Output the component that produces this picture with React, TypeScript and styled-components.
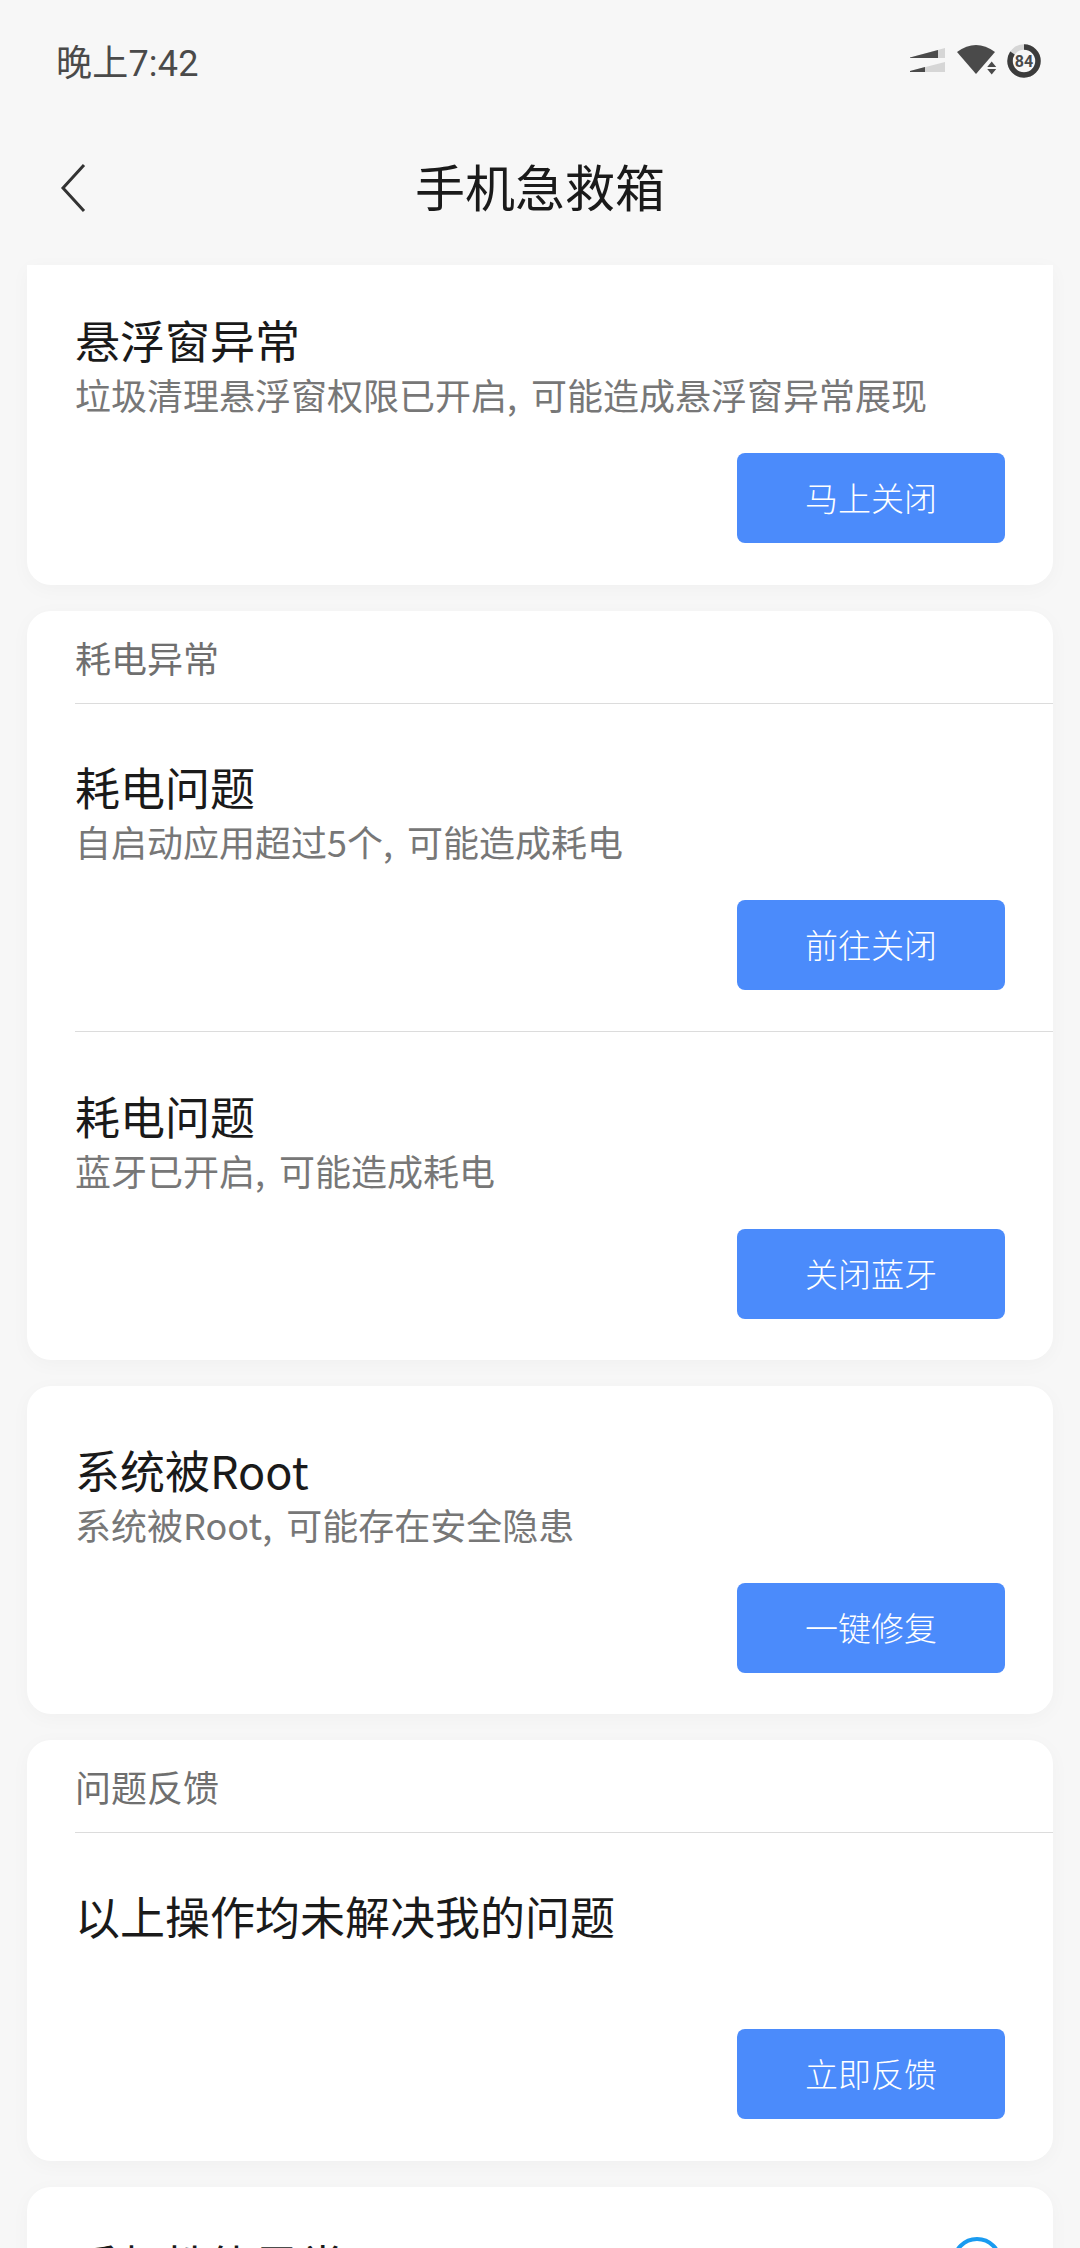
import { createGlobalStyle } from 'styled-components';
import styled from 'styled-components';

const GlobalStyle = createGlobalStyle`
  html, body {
    margin: 0;
    padding: 0;
    background: #f7f7f7;
  }
  body {
    font-family: "Noto Sans CJK SC", "Noto Sans", sans-serif;
  }
`

const Page = styled.div`
  width: 1080px;
  height: 2248px;
  overflow: hidden;
  background: #f7f7f7;
`

const StatusBar = styled.div`
  height: 124px;
  padding: 0 20px 2px 56px;
  box-sizing: border-box;
  display: flex;
  align-items: center;
  justify-content: space-between;
`

const Time = styled.div`
  margin-top: 6px;
  font-family: Roboto, "Noto Sans CJK SC", sans-serif;
  font-size: 36px;
  line-height: 50px;
  letter-spacing: 0.2px;
  color: #4a4a4a;
`

const StatusIcons = styled.svg`
  width: 150px;
  height: 60px;
  display: block;
`

const NavBar = styled.div`
  height: 141px;
  padding: 0 0 14px 59px;
  box-sizing: border-box;
  display: flex;
  align-items: center;
  position: relative;
`

const BackIcon = styled.svg`
  width: 28px;
  height: 50px;
  display: block;
`

const NavTitle = styled.div`
  position: absolute;
  left: 0;
  right: 0;
  top: 26px;
  text-align: center;
  font-size: 50px;
  line-height: 70px;
  color: #1a1a1a;
`

const CardList = styled.div`
  padding: 0 27px;
  display: flex;
  flex-direction: column;
  gap: 26px;
`

const Card = styled.div<{ $flatTop?: boolean }>`
  background: #fff;
  border-radius: ${(p) => (p.$flatTop ? '0 0 24px 24px' : '24px')};
  box-shadow: 0 4px 20px rgba(0, 0, 0, 0.03);
  overflow: hidden;
`

const SectionLabel = styled.div`
  height: 92px;
  margin-left: 48px;
  padding-top: 22px;
  box-sizing: border-box;
  font-size: 36px;
  line-height: 48px;
  color: #6f6f6f;
  box-shadow: 0 1px 0 #dcdcdc;
`

const Item = styled.div<{ $top?: number; $bottom?: number }>`
  margin-left: 48px;
  padding: ${(p) => p.$top ?? 54}px 48px ${(p) => p.$bottom ?? 41}px 0;
  & + & {
    border-top: 1px solid #dcdcdc;
  }
`

const ItemTitle = styled.div`
  font-size: 45px;
  line-height: 60px;
  color: #1a1a1a;
`

const ItemDesc = styled.div`
  min-height: 48px;
  font-size: 36px;
  line-height: 48px;
  word-spacing: 6px;
  color: #777;
`

const ActionRow = styled.div`
  margin-top: 35px;
  display: flex;
  justify-content: flex-end;
`

const ActionButton = styled.button`
  width: 268px;
  height: 90px;
  padding: 0 0 3px;
  border: 0;
  border-radius: 8px;
  background: #4b8bfb;
  color: #fff;
  font-family: inherit;
  font-size: 33px;
  font-weight: 300;
`

const Peek = styled.div`
  position: relative;
  padding: 48px 48px 0;
  height: 120px;
`

const Spinner = styled.div`
  position: absolute;
  top: 50px;
  right: 51px;
  width: 50px;
  height: 50px;
  box-sizing: border-box;
  border: 4px solid #1a9bf0;
  border-radius: 50%;
`

const App = () => {
  return (
    <Page>
      <GlobalStyle />
      <StatusBar>
        <Time>晚上7:42</Time>
        <StatusIcons viewBox='0 0 150 60'>
          <path d='M0 26.5 L35 17 V27 H0 Z' fill='#d6d6d6' />
          <path d='M0 26.5 L28 19 V27 H0 Z' fill='#4a4a4a' />
          <path d='M0 40 L35 31 V41 H0 Z' fill='#d6d6d6' />
          <path d='M0 40 L15 36 V41 H0 Z' fill='#4a4a4a' />
          <path d='M47 21 Q66 7 85 21 L66 43 Z' fill='#4a4a4a' />
          <path d='M81.7 30.5 l4.5 5.5 h-9 Z M81.7 43.5 l4.5 -5.5 h-9 Z' fill='#4a4a4a' />
          <circle cx='114' cy='30' r='14' fill='none' stroke='#d6d6d6' strokeWidth='5.5' />
          <circle cx='114' cy='30' r='14' fill='none' stroke='#3c3c3c' strokeWidth='5.5' strokeDasharray='74 88' transform='rotate(-90 114 30)' />
          <text x='114' y='36' textAnchor='middle' fontSize='16' fontWeight='700' fontFamily='Roboto, sans-serif' fill='#4a4a4a'>84</text>
        </StatusIcons>
      </StatusBar>
      <NavBar>
        <BackIcon viewBox='0 0 28 50'>
          <path d='M25 2 L4 25 L25 48' fill='none' stroke='#333' strokeWidth='3' />
        </BackIcon>
        <NavTitle>手机急救箱</NavTitle>
      </NavBar>
      <CardList>
        <Card $flatTop>
          <Item $top={45} $bottom={42}>
            <ItemTitle>悬浮窗异常</ItemTitle>
            <ItemDesc>垃圾清理悬浮窗权限已开启, 可能造成悬浮窗异常展现</ItemDesc>
            <ActionRow><ActionButton>马上关闭</ActionButton></ActionRow>
          </Item>
        </Card>
        <Card>
          <SectionLabel>耗电异常</SectionLabel>
          <Item>
            <ItemTitle>耗电问题</ItemTitle>
            <ItemDesc>自启动应用超过5个, 可能造成耗电</ItemDesc>
            <ActionRow><ActionButton>前往关闭</ActionButton></ActionRow>
          </Item>
          <Item>
            <ItemTitle>耗电问题</ItemTitle>
            <ItemDesc>蓝牙已开启, 可能造成耗电</ItemDesc>
            <ActionRow><ActionButton>关闭蓝牙</ActionButton></ActionRow>
          </Item>
        </Card>
        <Card>
          <Item>
            <ItemTitle>系统被Root</ItemTitle>
            <ItemDesc>系统被Root, 可能存在安全隐患</ItemDesc>
            <ActionRow><ActionButton>一键修复</ActionButton></ActionRow>
          </Item>
        </Card>
        <Card>
          <SectionLabel>问题反馈</SectionLabel>
          <Item $bottom={42}>
            <ItemTitle>以上操作均未解决我的问题</ItemTitle>
            <ItemDesc />
            <ActionRow><ActionButton>立即反馈</ActionButton></ActionRow>
          </Item>
        </Card>
        <Card>
          <Peek>
            <ItemTitle>手机性能异常</ItemTitle>
            <Spinner />
          </Peek>
        </Card>
      </CardList>
    </Page>
  )
}

export default App;
